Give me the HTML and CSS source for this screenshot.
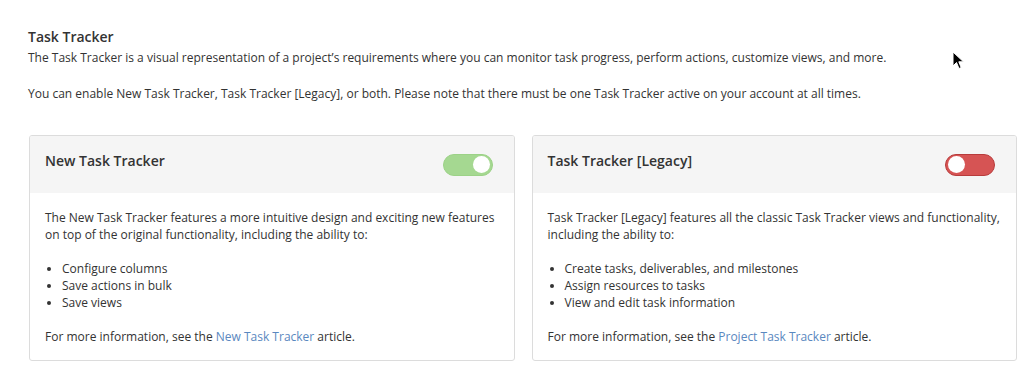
FILE: index.html
```html
<!DOCTYPE html>
<html lang="en">
<head>
    <meta charset="UTF-8" />
    <title>Task Tracker</title>
    <link rel="stylesheet" href="styles.css">
</head>
<body>
    <div class="page">
        <h2 class="title">Task Tracker</h2>
        <p class="intro">The Task Tracker is a visual representation of a project’s requirements where you can monitor task progress, perform actions, customize views, and more.</p>
        <p class="intro">You can enable New Task Tracker, Task Tracker [Legacy], or both. Please note that there must be one Task Tracker active on your account at all times.</p>

        <div class="cards">
            <!-- New tracker -->
            <div class="card">
                <div class="card-header">
                    <span class="card-title">New Task Tracker</span>
                    <span class="toggle on"><span class="knob"></span></span>
                </div>
                <div class="card-body">
                    <p>The New Task Tracker features a more intuitive design and exciting new features on top of the original functionality, including the ability to:</p>
                    <ul>
                        <li>Configure columns</li>
                        <li>Save actions in bulk</li>
                        <li>Save views</li>
                    </ul>
                    <p>For more information, see the <a href="#">New Task Tracker</a> article.</p>
                </div>
            </div>

            <!-- Legacy tracker -->
            <div class="card">
                <div class="card-header">
                    <span class="card-title">Task Tracker [Legacy]</span>
                    <span class="toggle off"><span class="knob"></span></span>
                </div>
                <div class="card-body">
                    <p>Task Tracker [Legacy] features all the classic Task Tracker views and functionality, including the ability to:</p>
                    <ul>
                        <li>Create tasks, deliverables, and milestones</li>
                        <li>Assign resources to tasks</li>
                        <li>View and edit task information</li>
                    </ul>
                    <p>For more information, see the <a href="#">Project Task Tracker</a> article.</p>
                </div>
            </div>
        </div>
    </div>

    <svg class="cursor" width="14" height="20" viewBox="0 0 14 20">
        <path d="M1 1 L1 15 L4.5 11.5 L7 17.5 L9.2 16.6 L6.8 10.8 L11.5 10.8 Z" fill="#000" stroke="#fff" stroke-width="1"/>
    </svg>
</body>
</html>
```

FILE: styles.css
```css
body {
    margin: 0;
    padding: 0;
    font-family: 'Open Sans', sans-serif;
    font-size: 12px;
    line-height: 18px;
    color: #333;
    background: #fff;
}

.page {
    padding: 27px 19px 0 28px;
}

.title {
    margin: 0 0 2px 0;
    font-size: 14px;
    line-height: 20px;
    font-weight: 600;
    color: #333;
}

.intro {
    margin: 0 0 18px 0;
}

.cards {
    display: flex;
    gap: 17px;
    margin-top: 32px;
    padding-left: 1px;
}

.card {
    flex: 1;
    border: 1px solid #dcdcdc;
    border-radius: 3px;
    overflow: hidden;
}

.card-header {
    height: 57px;
    display: flex;
    align-items: center;
    justify-content: space-between;
    padding: 0 21px 0 15px;
    background-color: #f5f5f5;
}

.card-title {
    font-size: 14px;
    font-weight: 600;
    color: #333;
    margin-bottom: 7px;
}

.toggle {
    display: flex;
    align-items: center;
    width: 50px;
    height: 22px;
    box-sizing: border-box;
    border-radius: 11px;
    padding: 0 2px;
}

.toggle.on {
    background-color: #a5d891;
    border: 1px solid #9cd287;
    justify-content: flex-end;
}

.toggle.off {
    background-color: #d65454;
    border: 1px solid #b83c3c;
    justify-content: flex-start;
}

.knob {
    width: 17px;
    height: 17px;
    border-radius: 50%;
    background-color: #fff;
}

.card-body {
    padding: 16px 16px 15px 15px;
    line-height: 17px;
}

.card-body p {
    margin: 0;
}

.card-body ul {
    margin: 17px 0;
    padding-left: 17px;
}

.card-body a {
    color: #5a88c0;
    text-decoration: none;
}

.cursor {
    position: absolute;
    left: 952px;
    top: 51px;
}
```
